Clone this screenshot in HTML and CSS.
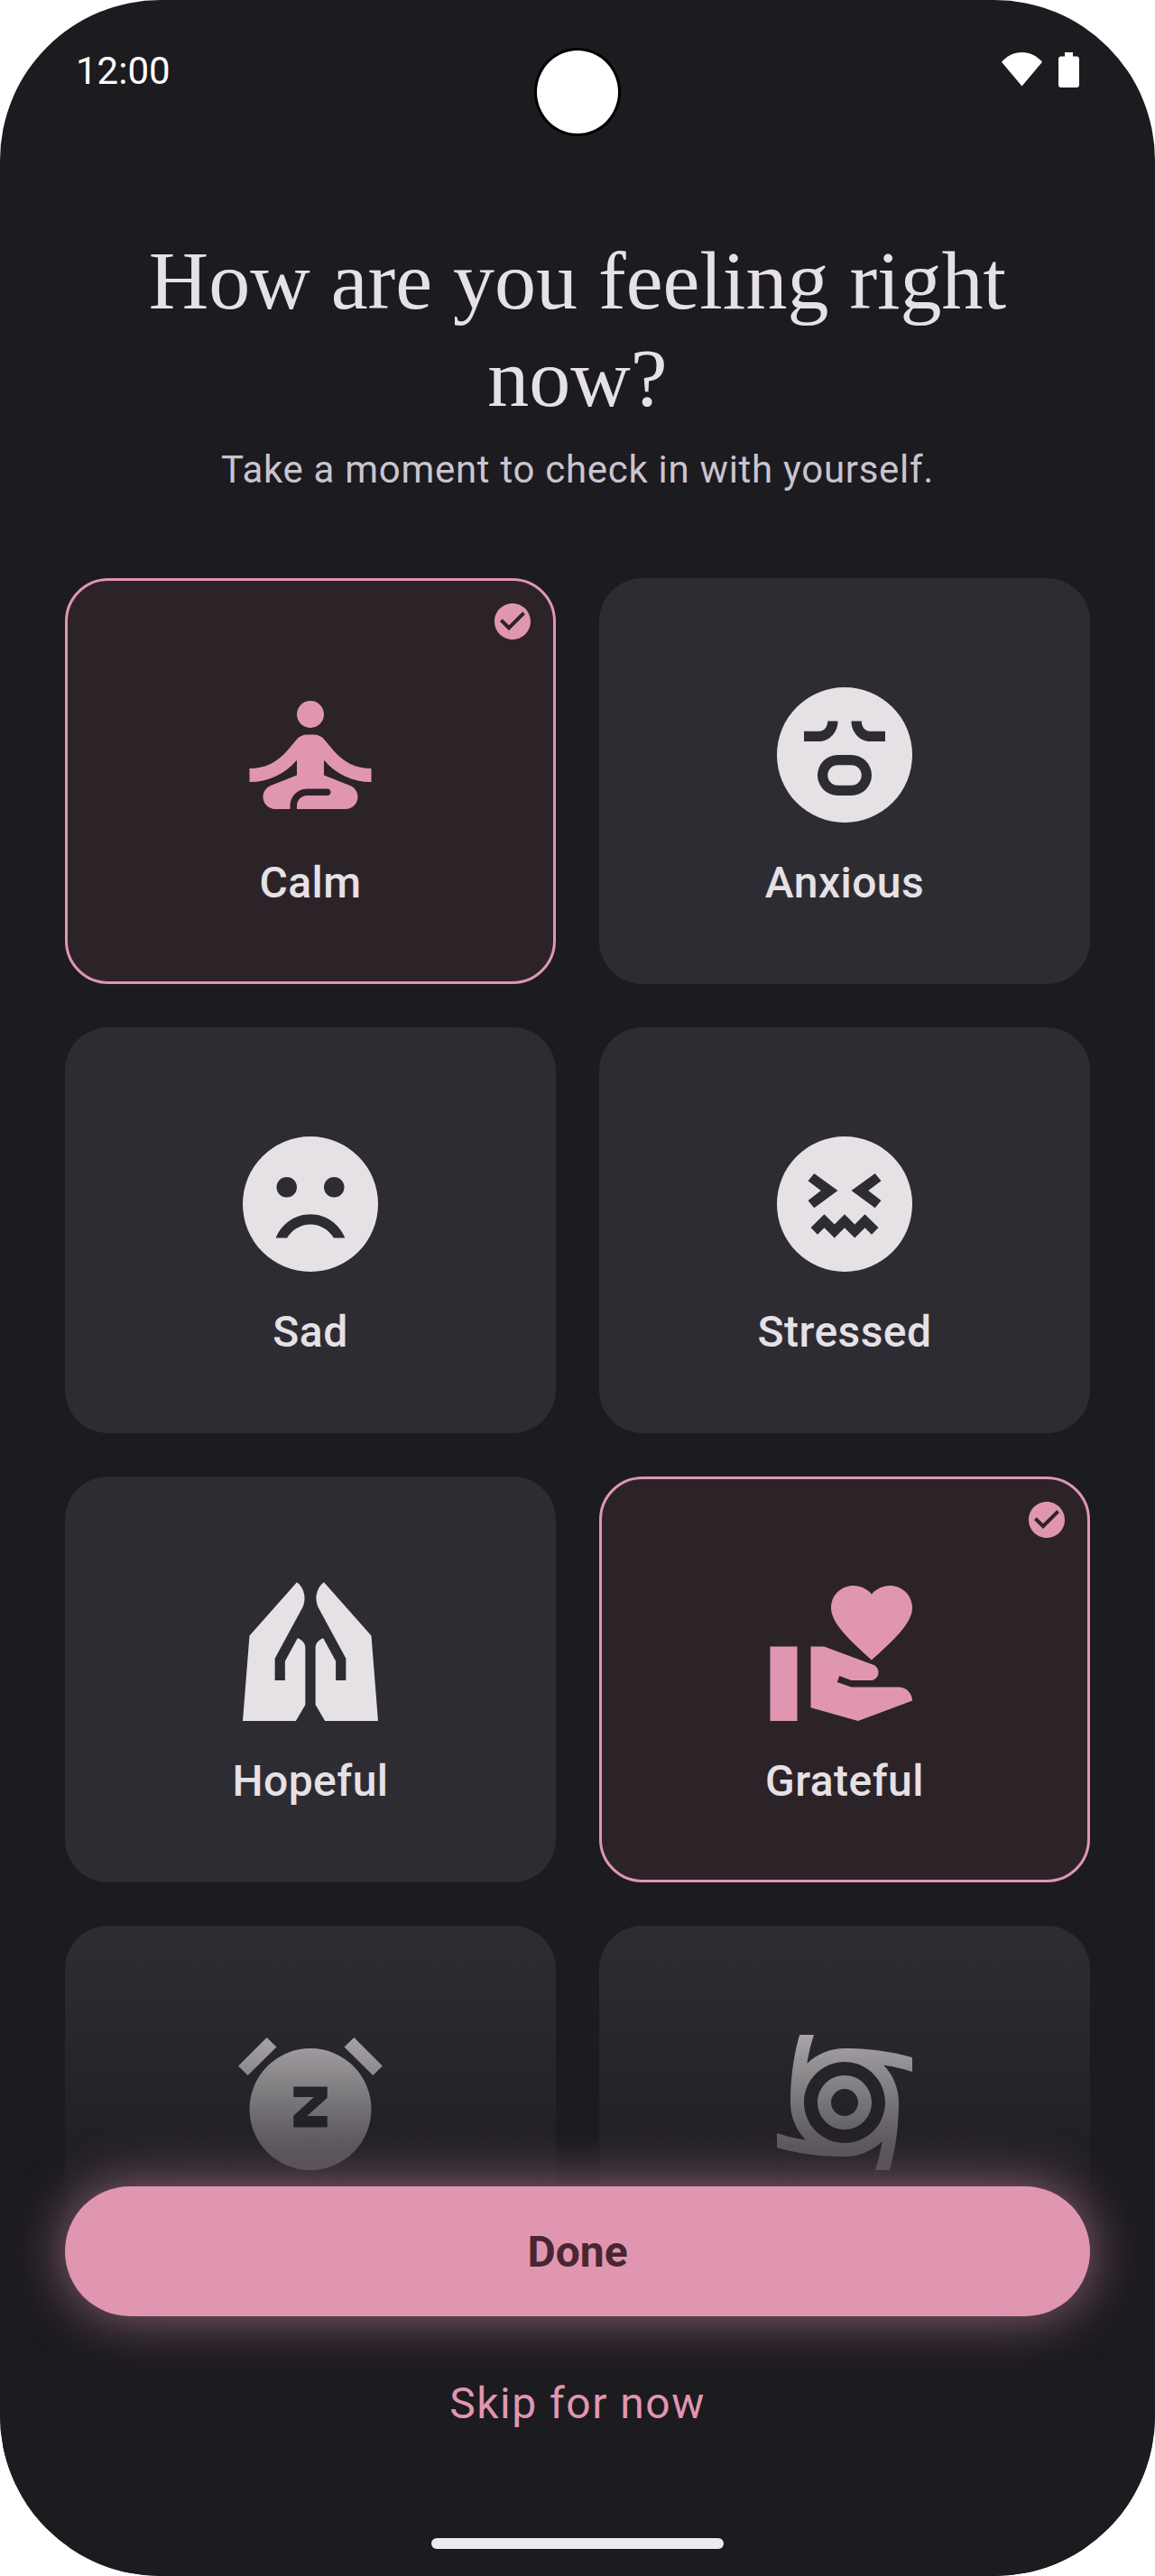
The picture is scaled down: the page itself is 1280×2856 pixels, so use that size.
FILE: index.html
```html
<!DOCTYPE html>
<html lang="en">
<head>
    <meta charset="UTF-8">
    <meta name="viewport" content="width=device-width, initial-scale=1.0">
    <title>Mood Check-in</title>
    <link rel="stylesheet" href="styles.css">
</head>
<body>
    <div class="phone">
        <div class="status-bar">
            <span class="clock">12:00</span>
            <div class="camera"></div>
            <div class="status-icons">
                <svg class="wifi" viewBox="0 0 45 37.5"><path d="M22.5 37.5L0 10.7C6 4 14 0 22.5 0s16.5 4 22.5 10.7z"/></svg>
                <svg class="battery" viewBox="0 0 23 39"><path d="M7 0h9v4.5h4a3 3 0 0 1 3 3V36a3 3 0 0 1-3 3H3a3 3 0 0 1-3-3V7.5a3 3 0 0 1 3-3h4z"/></svg>
            </div>
        </div>

        <header class="intro">
            <h1>How are you feeling right now?</h1>
            <p>Take a moment to check in with yourself.</p>
        </header>

        <div class="moods">
            <div class="mood selected">
                <svg class="mood-check" viewBox="0 0 24 24"><path d="M12 2C6.48 2 2 6.48 2 12s4.48 10 10 10 10-4.48 10-10S17.52 2 12 2zm-2 15l-5-5 1.41-1.41L10 14.17l7.59-7.59L19 8l-9 9z"/></svg>
                <svg class="mood-icon" viewBox="0 0 24 24">
                    <circle cx="12" cy="6" r="2"/>
                    <path d="M21,16v-2c-2.24,0-4.16-0.96-5.6-2.68l-1.34-1.6C13.68,9.26,13.12,9,12.53,9h-1.05c-0.59,0-1.15,0.26-1.53,0.72l-1.34,1.6C7.16,13.04,5.24,14,3,14v2c2.77,0,5.19-1.17,7-3.25V15l-3.88,1.55C5.45,16.82,5,17.48,5,18.21C5,19.2,5.8,20,6.79,20H9v-0.5c0-1.38,1.12-2.5,2.5-2.5h3c0.28,0,0.5,0.22,0.5,0.5S14.78,18,14.5,18h-3c-0.83,0-1.5,0.67-1.5,1.5V20h7.21C18.2,20,19,19.2,19,18.21c0-0.73-0.45-1.39-1.12-1.66L14,15v-2.25C15.81,14.83,18.23,16,21,16z"/>
                </svg>
                <span class="mood-label">Calm</span>
            </div>
            <div class="mood">
                <svg class="mood-icon" viewBox="0 0 24 24">
                    <path fill-rule="evenodd" d="M12 2a10 10 0 1 0 0 20a10 10 0 0 0 0-20zM6 8.5H8.25C9 8.5 9.5 7.8 9.5 7H11C11 8.66 9.75 10 8.25 10H6zM18 8.5H15.75C15 8.5 14.5 7.8 14.5 7H13C13 8.66 14.25 10 15.75 10H18zM11 12h2a3 3 0 0 1 0 6h-2a3 3 0 0 1 0-6zM11 13.5a1.5 1.5 0 0 0 0 3h2a1.5 1.5 0 0 0 0-3z"/>
                </svg>
                <span class="mood-label">Anxious</span>
            </div>
            <div class="mood">
                <svg class="mood-icon" viewBox="0 0 24 24">
                    <path fill-rule="evenodd" d="M12 2a10 10 0 1 0 0 20a10 10 0 0 0 0-20zM8.5 8a1.5 1.5 0 1 0 0 3a1.5 1.5 0 0 0 0-3zM15.5 8a1.5 1.5 0 1 0 0 3a1.5 1.5 0 0 0 0-3zM12 13.5c-2.33 0-4.31 1.46-5.11 3.5h1.67c.69-1.19 1.97-2 3.44-2s2.75.81 3.44 2h1.67c-.8-2.04-2.78-3.5-5.11-3.5z"/>
                </svg>
                <span class="mood-label">Sad</span>
            </div>
            <div class="mood">
                <svg class="mood-icon" viewBox="0 0 24 24">
                    <path fill-rule="evenodd" d="M12 2a10 10 0 1 0 0 20a10 10 0 0 0 0-20zM11 10L7.5 7.45L6.6 8.55L8.5 10L6.6 11.45L7.5 12.55zM13 10L16.5 7.45L17.4 8.55L15.5 10L17.4 11.45L16.5 12.55zM7 15.45L9 13.5L10.5 15L12 13.5L13.5 15L15 13.5L17 15.45L16 16.5L15 15.5L13.5 17L12 15.5L10.5 17L9 15.5L8 16.5z"/>
                </svg>
                <span class="mood-label">Stressed</span>
            </div>
            <div class="mood">
                <svg class="mood-icon" viewBox="0 0 24 24">
                    <path d="M10 1.5C11 2.2 11.5 3.8 10.85 5.2L6.75 12.75V16H8.25V13.15L10.1 9.75C10.8 10 11.25 10.5 11.25 11.2V19.6L9.85 22H2L3 9.4z"/>
                    <path d="M14 1.5C13 2.2 12.5 3.8 13.15 5.2L17.25 12.75V16H15.75V13.15L13.9 9.75C13.2 10 12.75 10.5 12.75 11.2V19.6L14.15 22H22L21 9.4z"/>
                </svg>
                <span class="mood-label">Hopeful</span>
            </div>
            <div class="mood selected">
                <svg class="mood-check" viewBox="0 0 24 24"><path d="M12 2C6.48 2 2 6.48 2 12s4.48 10 10 10 10-4.48 10-10S17.52 2 12 2zm-2 15l-5-5 1.41-1.41L10 14.17l7.59-7.59L19 8l-9 9z"/></svg>
                <svg class="mood-icon" viewBox="0 0 24 24">
                    <path d="M1 11h4v11H1zm15-7.75C16.65 2.49 17.66 2 18.7 2 20.55 2 22 3.45 22 5.3c0 2.27-2.91 4.9-6 7.7-3.09-2.81-6-5.44-6-7.7C10 3.45 11.45 2 13.3 2c1.04 0 2.05.49 2.7 1.25zM20 17h-7l-2.09-.73.33-.94L13 16h2.82c.65 0 1.18-.53 1.18-1.18 0-.49-.31-.93-.77-1.11L8.97 11H7v9.02L14 22l8.01-3c-.01-1.1-.9-2-2.01-2z"/>
                </svg>
                <span class="mood-label">Grateful</span>
            </div>
            <div class="mood">
                <svg class="mood-icon" viewBox="0 0 24 24">
                    <path fill-rule="evenodd" d="M12 4a9 9 0 1 0 0 18a9 9 0 0 0 0-18zM9.5 9.65H14.5V11.3L11.5 14H14.5V15.65H9.5V13.95L12.5 11.2H9.5z"/>
                    <path d="M5.55 2.4L7 3.8L2.75 8L1.35 6.6zM18.45 2.4L17 3.8L21.25 8L22.65 6.6z"/>
                </svg>
                <span class="mood-label">Tired</span>
            </div>
            <div class="mood">
                <svg class="mood-icon" viewBox="0 0 24 24">
                    <path d="M12,8c-2.21,0-4,1.79-4,4s1.79,4,4,4s4-1.79,4-4S14.21,8,12,8z M12,14c-1.1,0-2-0.9-2-2s0.9-2,2-2s2,0.9,2,2S13.1,14,12,14z"/>
                    <path d="M22,7.47V5.35C20.05,4.77,16.56,4,12,4C9.85,4,7.89,4.86,6.46,6.24C6.59,5.39,6.86,3.84,7.47,2H5.35C4.77,3.95,4,7.44,4,12c0,2.15,0.86,4.11,2.24,5.54c-0.85-0.14-2.4-0.4-4.24-1.01v2.12C3.95,19.23,7.44,20,12,20c2.15,0,4.11-0.86,5.54-2.24c-0.14,0.85-0.4,2.4-1.01,4.24h2.12C19.23,20.05,20,16.56,20,12c0-2.15-0.86-4.11-2.24-5.54C18.61,6.59,20.16,6.86,22,7.47z M12,18c-3.31,0-6-2.69-6-6s2.69-6,6-6s6,2.69,6,6S15.31,18,12,18z"/>
                </svg>
                <span class="mood-label">Overwhelmed</span>
            </div>
        </div>

        <footer class="actions">
            <button class="done-btn" type="button">Done</button>
            <button class="skip-btn" type="button">Skip for now</button>
            <div class="home-bar"></div>
        </footer>
    </div>
</body>
</html>
```

FILE: styles.css
```css
* {
    box-sizing: border-box;
}
body {
    margin: 0;
    background-color: #fff;
    font-family: Roboto, sans-serif;
}
.phone {
    position: relative;
    width: 1280px;
    height: 2856px;
    overflow: hidden;
    background-color: #1c1b1f;
    border-radius: 178px;
    color: #e6e1e5;
}
.status-bar {
    position: relative;
    height: 144px;
    padding: 55px 84px 0 84px;
    display: flex;
    justify-content: space-between;
    align-items: flex-start;
}
.clock {
    font-size: 42px;
    line-height: 48px;
    color: #fff;
}
.camera {
    position: absolute;
    left: 592px;
    top: 53px;
    width: 96px;
    height: 98px;
    border-radius: 50%;
    background-color: #fff;
    border: 3px solid #000;
}
.status-icons {
    display: flex;
    gap: 18px;
    padding-top: 3px;
}
.status-icons svg {
    display: block;
    fill: #fff;
}
.wifi {
    width: 45px;
    height: 37.5px;
}
.battery {
    width: 23px;
    height: 39px;
}
.intro {
    padding: 113px 96px 0;
    text-align: center;
}
.intro h1 {
    margin: 0;
    font-family: "Liberation Serif", serif;
    font-size: 92px;
    font-weight: 400;
    line-height: 108px;
}
.intro p {
    margin: 18px 0 0;
    font-size: 42px;
    line-height: 60px;
    letter-spacing: 0.7px;
    color: #cac4d0;
}
.moods {
    margin-top: 90px;
    padding: 0 72px;
    display: grid;
    grid-template-columns: 1fr 1fr;
    gap: 48px;
}
.mood {
    position: relative;
    height: 450px;
    padding-top: 103px;
    display: flex;
    flex-direction: column;
    align-items: center;
    gap: 16px;
    background-color: #2e2c33;
    border: 3px solid transparent;
    border-radius: 48px;
}
.mood-icon {
    width: 180px;
    height: 180px;
    fill: #e6e1e5;
}
.mood-label {
    font-size: 48px;
    font-weight: 500;
    line-height: 72px;
    letter-spacing: 0.45px;
}
.mood.selected {
    background-color: #2c2329;
    border-color: #e096b0;
}
.mood.selected .mood-icon {
    fill: #e096b0;
}
.mood-check {
    position: absolute;
    top: 21px;
    right: 21px;
    width: 48px;
    height: 48px;
    fill: #e096b0;
}
.actions {
    position: absolute;
    left: 0;
    right: 0;
    bottom: 0;
    height: 696px;
    padding: 264px 72px 0;
    display: flex;
    flex-direction: column;
    align-items: center;
    background: linear-gradient(to bottom, rgba(28, 27, 31, 0), #1c1b1f 45%);
}
.done-btn {
    width: 100%;
    height: 144px;
    flex-shrink: 0;
    border: none;
    border-radius: 72px;
    background-color: #e096b0;
    color: #4a2532;
    font-family: Roboto, sans-serif;
    font-size: 48px;
    font-weight: 700;
    box-shadow: 0 0 60px rgba(224, 150, 176, 0.6);
}
.skip-btn {
    margin-top: 24px;
    padding: 0;
    height: 144px;
    flex-shrink: 0;
    border: none;
    background: none;
    color: #e096b0;
    font-family: Roboto, sans-serif;
    font-size: 48px;
    letter-spacing: 1.5px;
}
.home-bar {
    position: absolute;
    left: 478px;
    bottom: 30px;
    width: 324px;
    height: 12px;
    border-radius: 6px;
    background-color: #ececec;
}
```
